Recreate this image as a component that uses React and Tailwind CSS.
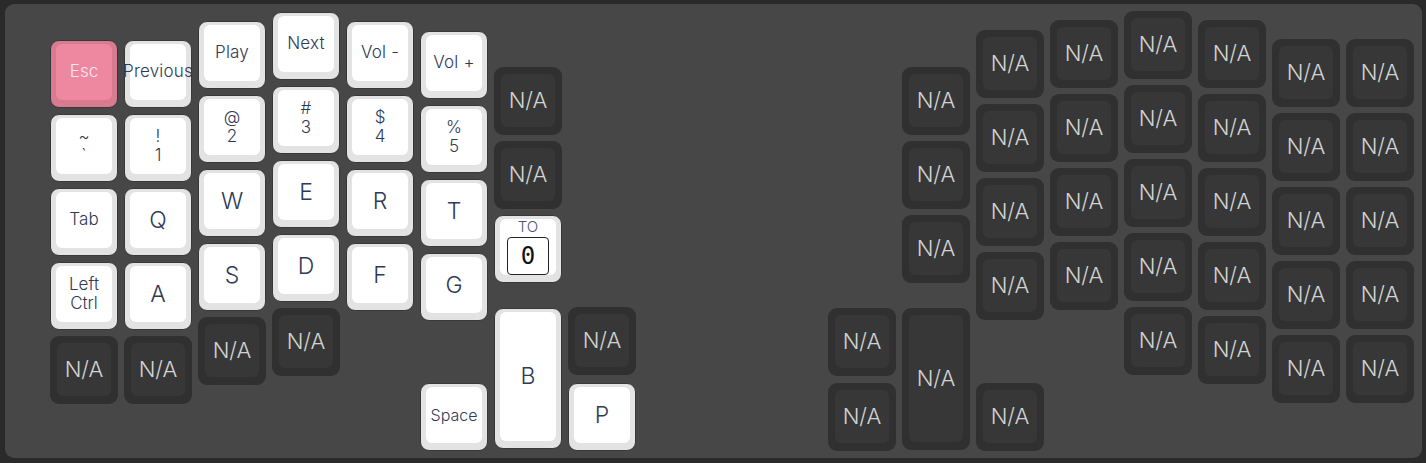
import React from 'react'

// key positions are page coords of the 68px key box (incl. 1px outline)
const LEFT = [
  { x: 50, y: 40, label: 'Esc', kind: 'pink', size: 'sm' },
  { x: 50, y: 114, label: ['~', '`'] },
  { x: 50, y: 188, label: 'Tab', size: 'sm' },
  { x: 50, y: 262, label: ['Left', 'Ctrl'] },
  { x: 50, y: 336, kind: 'dark' },

  { x: 124, y: 40, label: 'Previous', size: 'sm' },
  { x: 124, y: 114, label: ['!', '1'] },
  { x: 124, y: 188, label: 'Q' },
  { x: 124, y: 262, label: 'A' },
  { x: 124, y: 336, kind: 'dark' },

  { x: 198, y: 21, label: 'Play', size: 'sm' },
  { x: 198, y: 95, label: ['@', '2'] },
  { x: 198, y: 169, label: 'W' },
  { x: 198, y: 243, label: 'S' },
  { x: 198, y: 317, kind: 'dark' },

  { x: 272, y: 12, label: 'Next', size: 'sm' },
  { x: 272, y: 86, label: ['#', '3'] },
  { x: 272, y: 160, label: 'E' },
  { x: 272, y: 234, label: 'D' },
  { x: 272, y: 308, kind: 'dark' },

  { x: 346, y: 21, label: 'Vol -', size: 'sm' },
  { x: 346, y: 95, label: ['$', '4'] },
  { x: 346, y: 169, label: 'R' },
  { x: 346, y: 243, label: 'F' },

  { x: 420, y: 31, label: 'Vol +', size: 'sm' },
  { x: 420, y: 105, label: ['%', '5'] },
  { x: 420, y: 179, label: 'T' },
  { x: 420, y: 253, label: 'G' },
  { x: 420, y: 383, label: 'Space', size: 'xs' },

  { x: 494, y: 67, kind: 'dark' },
  { x: 494, y: 141, kind: 'dark' },
  { x: 494, y: 215, kind: 'layer' },
  { x: 494, y: 308, h: 141, label: 'B' },

  { x: 568, y: 307, kind: 'dark' },
  { x: 568, y: 383, label: 'P' },
]

const RIGHT_COLS = [
  { x: 1346, ys: [39, 113, 187, 261, 335] },
  { x: 1272, ys: [39, 113, 187, 261, 335] },
  { x: 1198, ys: [20, 94, 168, 242, 316] },
  { x: 1124, ys: [11, 85, 159, 233, 307] },
  { x: 1050, ys: [20, 94, 168, 242] },
  { x: 976, ys: [30, 104, 178, 252, 383] },
  { x: 902, ys: [67, 141, 215] },
  { x: 828, ys: [308, 383] },
]

const RIGHT = [
  ...RIGHT_COLS.flatMap(c => c.ys.map(y => ({ x: c.x, y, kind: 'dark' }))),
  { x: 902, y: 308, h: 142, kind: 'dark' },
]

const KEYS = [...LEFT, ...RIGHT]

function Legend({ label, size }) {
  if (Array.isArray(label)) {
    return (
      <div className="flex flex-col items-center text-[17px] leading-[19px] text-[#2f3a55]">
        <span>{label[0]}</span>
        <span>{label[1]}</span>
      </div>
    )
  }
  if (size === 'sm') return <span className="whitespace-nowrap text-[17px] tracking-[0.2px] text-[#2f3a55]">{label}</span>
  if (size === 'xs') return <span className="whitespace-nowrap text-[16px] text-[#2f3a55]">{label}</span>
  return <span className="text-[23px] text-[#2f3a55]">{label}</span>
}

function Key({ x, y, h = 68, label, kind = 'light', size }) {
  const pos = { left: x - 5, top: y - 4, height: h }

  if (kind === 'dark') {
    return (
      <div style={pos} className="absolute w-[68px] rounded-[9px] bg-[#303030] pt-[7px] px-[7px] pb-[8px]">
        <div className="flex h-full w-full items-center justify-center rounded-[6px] bg-[#373737]">
          <span className="text-[22px] text-[#d2d2d2]">N/A</span>
        </div>
      </div>
    )
  }

  if (kind === 'pink') {
    return (
      <div style={pos} className="absolute w-[68px] rounded-[9px] border border-[#383838] bg-[#d97b90] pt-[3px] px-[5px] pb-[7px]">
        <div className="flex h-full w-full items-center justify-center rounded-[6px] bg-[#ee87a0]">
          <span className="text-[17px] text-[#f8e8ec]">{label}</span>
        </div>
      </div>
    )
  }

  if (kind === 'layer') {
    return (
      <div style={pos} className="absolute w-[68px] rounded-[9px] border border-[#383838] bg-[#e3e3e3] pt-[3px] px-[5px] pb-[7px]">
        <div className="flex h-full w-full flex-col items-center rounded-[6px] bg-white">
          <span className="text-[15px] leading-[16px] text-[#4b5672]">TO</span>
          <div className="mt-[2px] flex h-[41px] w-[42px] items-center justify-center rounded-[4px] border border-[#222] bg-white font-['DejaVu_Sans_Mono',monospace] text-[24px] text-[#111]">
            0
          </div>
        </div>
      </div>
    )
  }

  return (
    <div style={pos} className="absolute w-[68px] rounded-[9px] border border-[#383838] bg-[#e3e3e3] pt-[3px] px-[5px] pb-[7px]">
      <div className="flex h-full w-full items-center justify-center rounded-[6px] bg-white">
        <Legend label={label} size={size} />
      </div>
    </div>
  )
}

export default function App() {
  return (
    <div className="h-[463px] w-[1426px] bg-[#2a2a2a] pl-[5px] pt-[4px] font-['Inter','Noto_Sans',sans-serif] font-light">
      <div className="relative h-[454px] w-[1417px] rounded-[9px] bg-[#474747]">
        {KEYS.map((k, i) => (
          <Key key={i} {...k} />
        ))}
      </div>
    </div>
  )
}
